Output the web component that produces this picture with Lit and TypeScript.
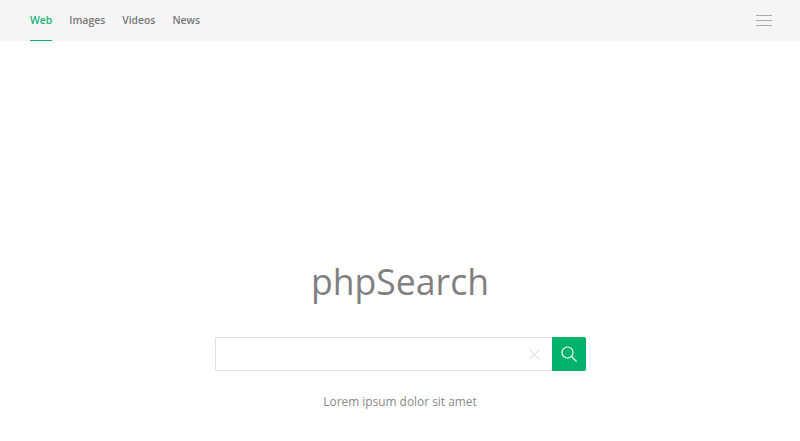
import { LitElement, html, css } from 'lit';
import { customElement } from 'lit/decorators.js';

const TABS = ['Web', 'Images', 'Videos', 'News'];

@customElement('app-root')
export class AppRoot extends LitElement {
  static styles = css`
    :host {
      display: block;
      height: 441px;
      overflow: hidden;
      background: #fff;
      font-family: "Open Sans", sans-serif;
    }
    .nav {
      display: flex;
      justify-content: space-between;
      align-items: center;
      height: 41px;
      padding: 0 28px 0 30px;
      background: #f5f5f5;
    }
    .tabs {
      display: flex;
      gap: 17px;
      height: 41px;
    }
    .tab {
      display: flex;
      align-items: center;
      padding-bottom: 1px;
      box-sizing: border-box;
      font-size: 10.4px;
      font-weight: 600;
      color: #777;
      border-bottom: 1px solid transparent;
    }
    .tab.active {
      color: #1ab37a;
      border-bottom: 1px solid #00b26b;
    }
    .menu {
      display: block;
    }
    .main {
      display: flex;
      flex-direction: column;
      align-items: center;
      padding-top: 214px;
    }
    h1 {
      margin: 0;
      font-size: 35.6px;
      line-height: 52px;
      font-weight: 400;
      color: #808080;
    }
    .search {
      display: flex;
      margin-top: 30px;
      width: 371px;
      height: 34px;
    }
    .field {
      flex: 1;
      display: flex;
      justify-content: flex-end;
      align-items: center;
      padding-right: 12px;
      box-sizing: border-box;
      border: 1px solid #e0e0e0;
      border-right: 0;
      border-radius: 2px 0 0 2px;
    }
    .go {
      display: flex;
      align-items: center;
      justify-content: center;
      width: 34px;
      background: #00b26b;
      border-radius: 0 2px 2px 0;
    }
    .tagline {
      margin: 21px 0 0;
      font-size: 11.9px;
      line-height: 18px;
      color: #8a8a8a;
    }
  `;

  render() {
    return html`
      <div class="nav">
        <div class="tabs">
          ${TABS.map((t, i) => html`<div class="tab ${i === 0 ? 'active' : ''}">${t}</div>`)}
        </div>
        <svg class="menu" width="16" height="11" viewBox="0 0 16 11" fill="none" stroke="#aaa" stroke-width="1">
          <path d="M0 .5h16M0 5.5h16M0 10.5h16" />
        </svg>
      </div>
      <div class="main">
        <h1>phpSearch</h1>
        <div class="search">
          <div class="field">
            <svg width="11" height="11" viewBox="0 0 11 11" fill="none" stroke="#d8d8d8" stroke-width="1">
              <path d="M.5.5l10 10M10.5.5l-10 10" />
            </svg>
          </div>
          <div class="go">
            <svg width="16" height="16" viewBox="0 0 16 16" fill="none" stroke="#fff" stroke-width="1.2">
              <circle cx="6.5" cy="6.5" r="5.5" />
              <path d="M10.5 10.5l5 5" />
            </svg>
          </div>
        </div>
        <p class="tagline">Lorem ipsum dolor sit amet</p>
      </div>
    `;
  }
}
